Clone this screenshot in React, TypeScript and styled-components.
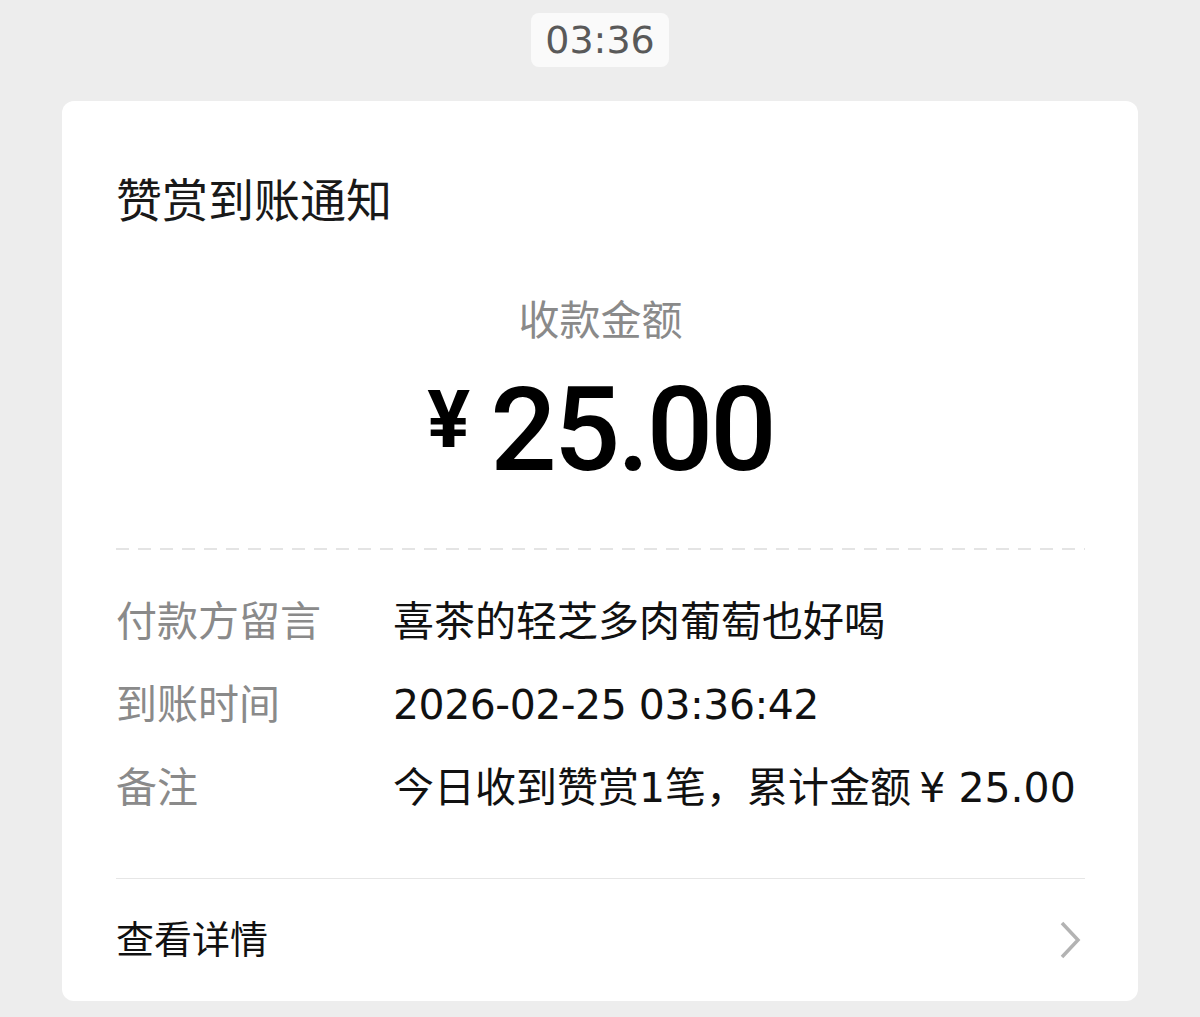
import React from 'react';
import styled, { createGlobalStyle } from 'styled-components';

const GlobalStyle = createGlobalStyle`
  html, body {
    margin: 0;
    padding: 0;
    background: #ededed;
  }
  body {
    font-family: "DejaVu Sans", "Noto Sans CJK SC", sans-serif;
    -webkit-font-smoothing: antialiased;
  }
`;

const Page = styled.div`
  display: flex;
  flex-direction: column;
  align-items: center;
  padding: 13px 62px 17px;
`;

const TimeChip = styled.div`
  height: 54px;
  line-height: 54px;
  padding: 0 14px;
  border-radius: 8px;
  background: #fafafa;
  color: #595959;
  font-size: 38px;
`;

const Card = styled.div`
  align-self: stretch;
  margin-top: 34px;
  background: #fff;
  border-radius: 12px;
  padding: 70px 53px 0 54px;
  display: flex;
  flex-direction: column;
`;

const Title = styled.div`
  font-size: 46px;
  line-height: 60px;
  color: #191919;
`;

const AmountLabel = styled.div`
  margin-top: 65px;
  text-align: center;
  font-size: 41px;
  line-height: 50px;
  color: #8a8a8a;
`;

const Amount = styled.div`
  margin-top: 24px;
  display: flex;
  justify-content: center;
  align-items: flex-start;
  color: #000;
  font-family: Roboto, "Liberation Sans", sans-serif;
`;

const Yen = styled.span`
  font-size: 80px;
  line-height: 100px;
  font-weight: 700;
  margin-right: 20px;
`;

const Figure = styled.span`
  font-size: 117px;
  line-height: 120px;
  font-weight: 500;
  letter-spacing: -3px;
`;

const Divider = styled.div<{ dashed?: boolean }>`
  height: ${p => (p.dashed ? '2px' : '1px')};
  background: ${p =>
    p.dashed
      ? 'repeating-linear-gradient(to right, #e4e4e4 0 13px, transparent 13px 22px)'
      : '#e6e6e6'};
`;

const Details = styled.div`
  display: flex;
  flex-direction: column;
  margin: 31px 0 48px;
`;

const Row = styled.div`
  display: grid;
  grid-template-columns: 277px 1fr;
  font-size: 41px;
  line-height: 83px;
  white-space: nowrap;
`;

const Label = styled.span`
  color: #8a8a8a;
`;

const Value = styled.span<{ numeric?: boolean }>`
  color: #111;
  letter-spacing: ${p => (p.numeric ? '-0.5px' : '0')};
`;

const Footer = styled.div`
  height: 122px;
  display: flex;
  align-items: center;
  justify-content: space-between;
  font-size: 38px;
  line-height: 50px;
  color: #111;
`;

const Chevron = () => (
  <svg width="24" height="40" viewBox="0 0 24 40" style={{ marginRight: 4 }}>
    <polyline
      points="5,3 21,20 5,37"
      fill="none"
      stroke="#b3b3b3"
      strokeWidth="3.5"
    />
  </svg>
);

const rows = [
  { label: '付款方留言', value: '喜茶的轻芝多肉葡萄也好喝' },
  { label: '到账时间', value: '2026-02-25 03:36:42', numeric: true },
  { label: '备注', value: '今日收到赞赏1笔，累计金额\u2009¥ 25.00' },
];

export default function App() {
  return (
    <>
      <GlobalStyle />
      <Page>
        <TimeChip>03:36</TimeChip>
        <Card>
          <Title>赞赏到账通知</Title>
          <AmountLabel>收款金额</AmountLabel>
          <Amount>
            <Yen>¥</Yen>
            <Figure>25.00</Figure>
          </Amount>
          <Divider dashed style={{ marginTop: 58 }} />
          <Details>
            {rows.map(r => (
              <Row key={r.label}>
                <Label>{r.label}</Label>
                <Value numeric={r.numeric}>{r.value}</Value>
              </Row>
            ))}
          </Details>
          <Divider />
          <Footer>
            <span>查看详情</span>
            <Chevron />
          </Footer>
        </Card>
      </Page>
    </>
  );
}
